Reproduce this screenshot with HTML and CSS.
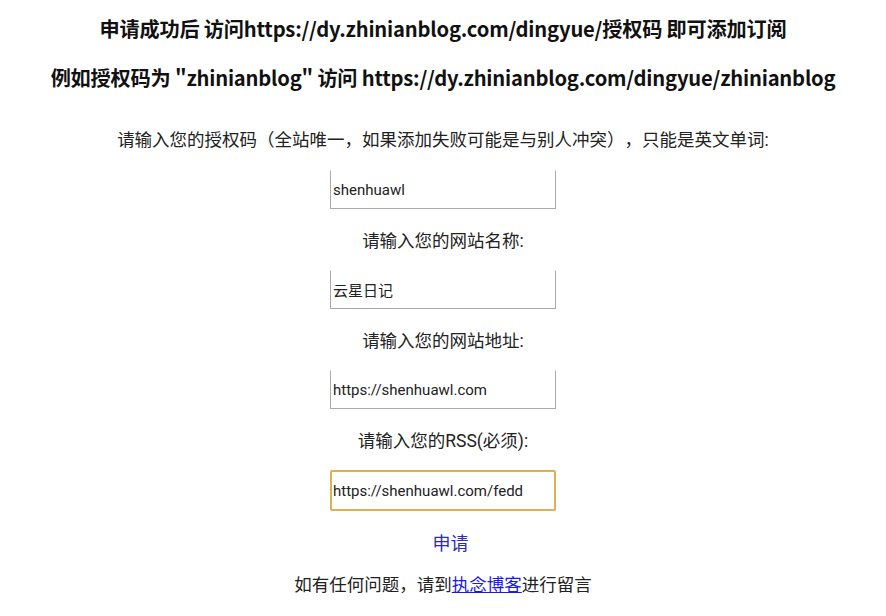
FILE: index.html
```html
<!DOCTYPE html>
<html lang="zh">
<head>
<meta charset="utf-8">
<title>订阅申请</title>
<link rel="stylesheet" href="styles.css">
</head>
<body>
<div class="page">
  <h2 class="title">申请成功后 访问https://dy.zhinianblog.com/dingyue/授权码 即可添加订阅</h2>
  <h2 class="title second">例如授权码为 "zhinianblog" 访问 https://dy.zhinianblog.com/dingyue/zhinianblog</h2>
  <form class="form">
    <p class="label first">请输入您的授权码（全站唯一，如果添加失败可能是与别人冲突），只能是英文单词:</p>
    <input class="field" type="text" value="shenhuawl">
    <p class="label">请输入您的网站名称:</p>
    <input class="field" type="text" value="云星日记">
    <p class="label">请输入您的网站地址:</p>
    <input class="field" type="text" value="https://shenhuawl.com">
    <p class="label">请输入您的RSS(必须):</p>
    <input class="field focused" type="text" value="https://shenhuawl.com/fedd">
    <button class="submit" type="button">申请</button>
  </form>
  <p class="footer">如有任何问题，请到<a href="#">执念博客</a>进行留言</p>
</div>
</body>
</html>
```

FILE: styles.css
```css
html, body {
  margin: 0;
  padding: 0;
  background: #ffffff;
}
.page {
  width: 886px;
  display: flex;
  flex-direction: column;
  align-items: center;
  text-align: center;
  color: #222;
  font-family: Roboto, "Noto Sans CJK SC", sans-serif;
  text-spacing-trim: space-all;
}
.title {
  margin: 14px 0 0;
  font-family: "Noto Sans CJK SC", sans-serif;
  font-weight: 700;
  font-size: 20.2px;
  line-height: 30px;
  color: #111;
  letter-spacing: -0.2px;
}
.title.second {
  margin-top: 19px;
}
.form {
  display: flex;
  flex-direction: column;
  align-items: center;
}
.label {
  margin: 20px 0 17px;
  font-size: 17.5px;
  line-height: 24px;
  color: #222;
}
.label.first {
  margin-top: 35px;
  margin-bottom: 18px;
}
.field {
  box-sizing: border-box;
  width: 226px;
  height: 39px;
  margin: 0;
  padding: 0 2px;
  border: 1px solid #a9a9a9;
  border-top-color: transparent;
  border-radius: 0;
  font-family: Roboto, "Noto Sans CJK SC", sans-serif;
  font-size: 15px;
  color: #222;
  background: #fff;
  outline: none;
}
.field.focused {
  height: 41px;
  border: 2px solid #e0b050;
  border-radius: 2px;
  padding: 0 1px;
}
.submit {
  margin: 19px 0 0 15px;
  padding: 0;
  border: none;
  background: none;
  font-family: "Noto Sans CJK SC", Roboto, sans-serif;
  font-size: 18px;
  line-height: 24px;
  color: #2b2bb5;
  cursor: pointer;
}
.footer {
  margin: 19px 0 0;
  font-size: 17.5px;
  line-height: 24px;
  color: #222;
}
.footer a {
  color: #1a1ae6;
  text-decoration: underline;
}
```
